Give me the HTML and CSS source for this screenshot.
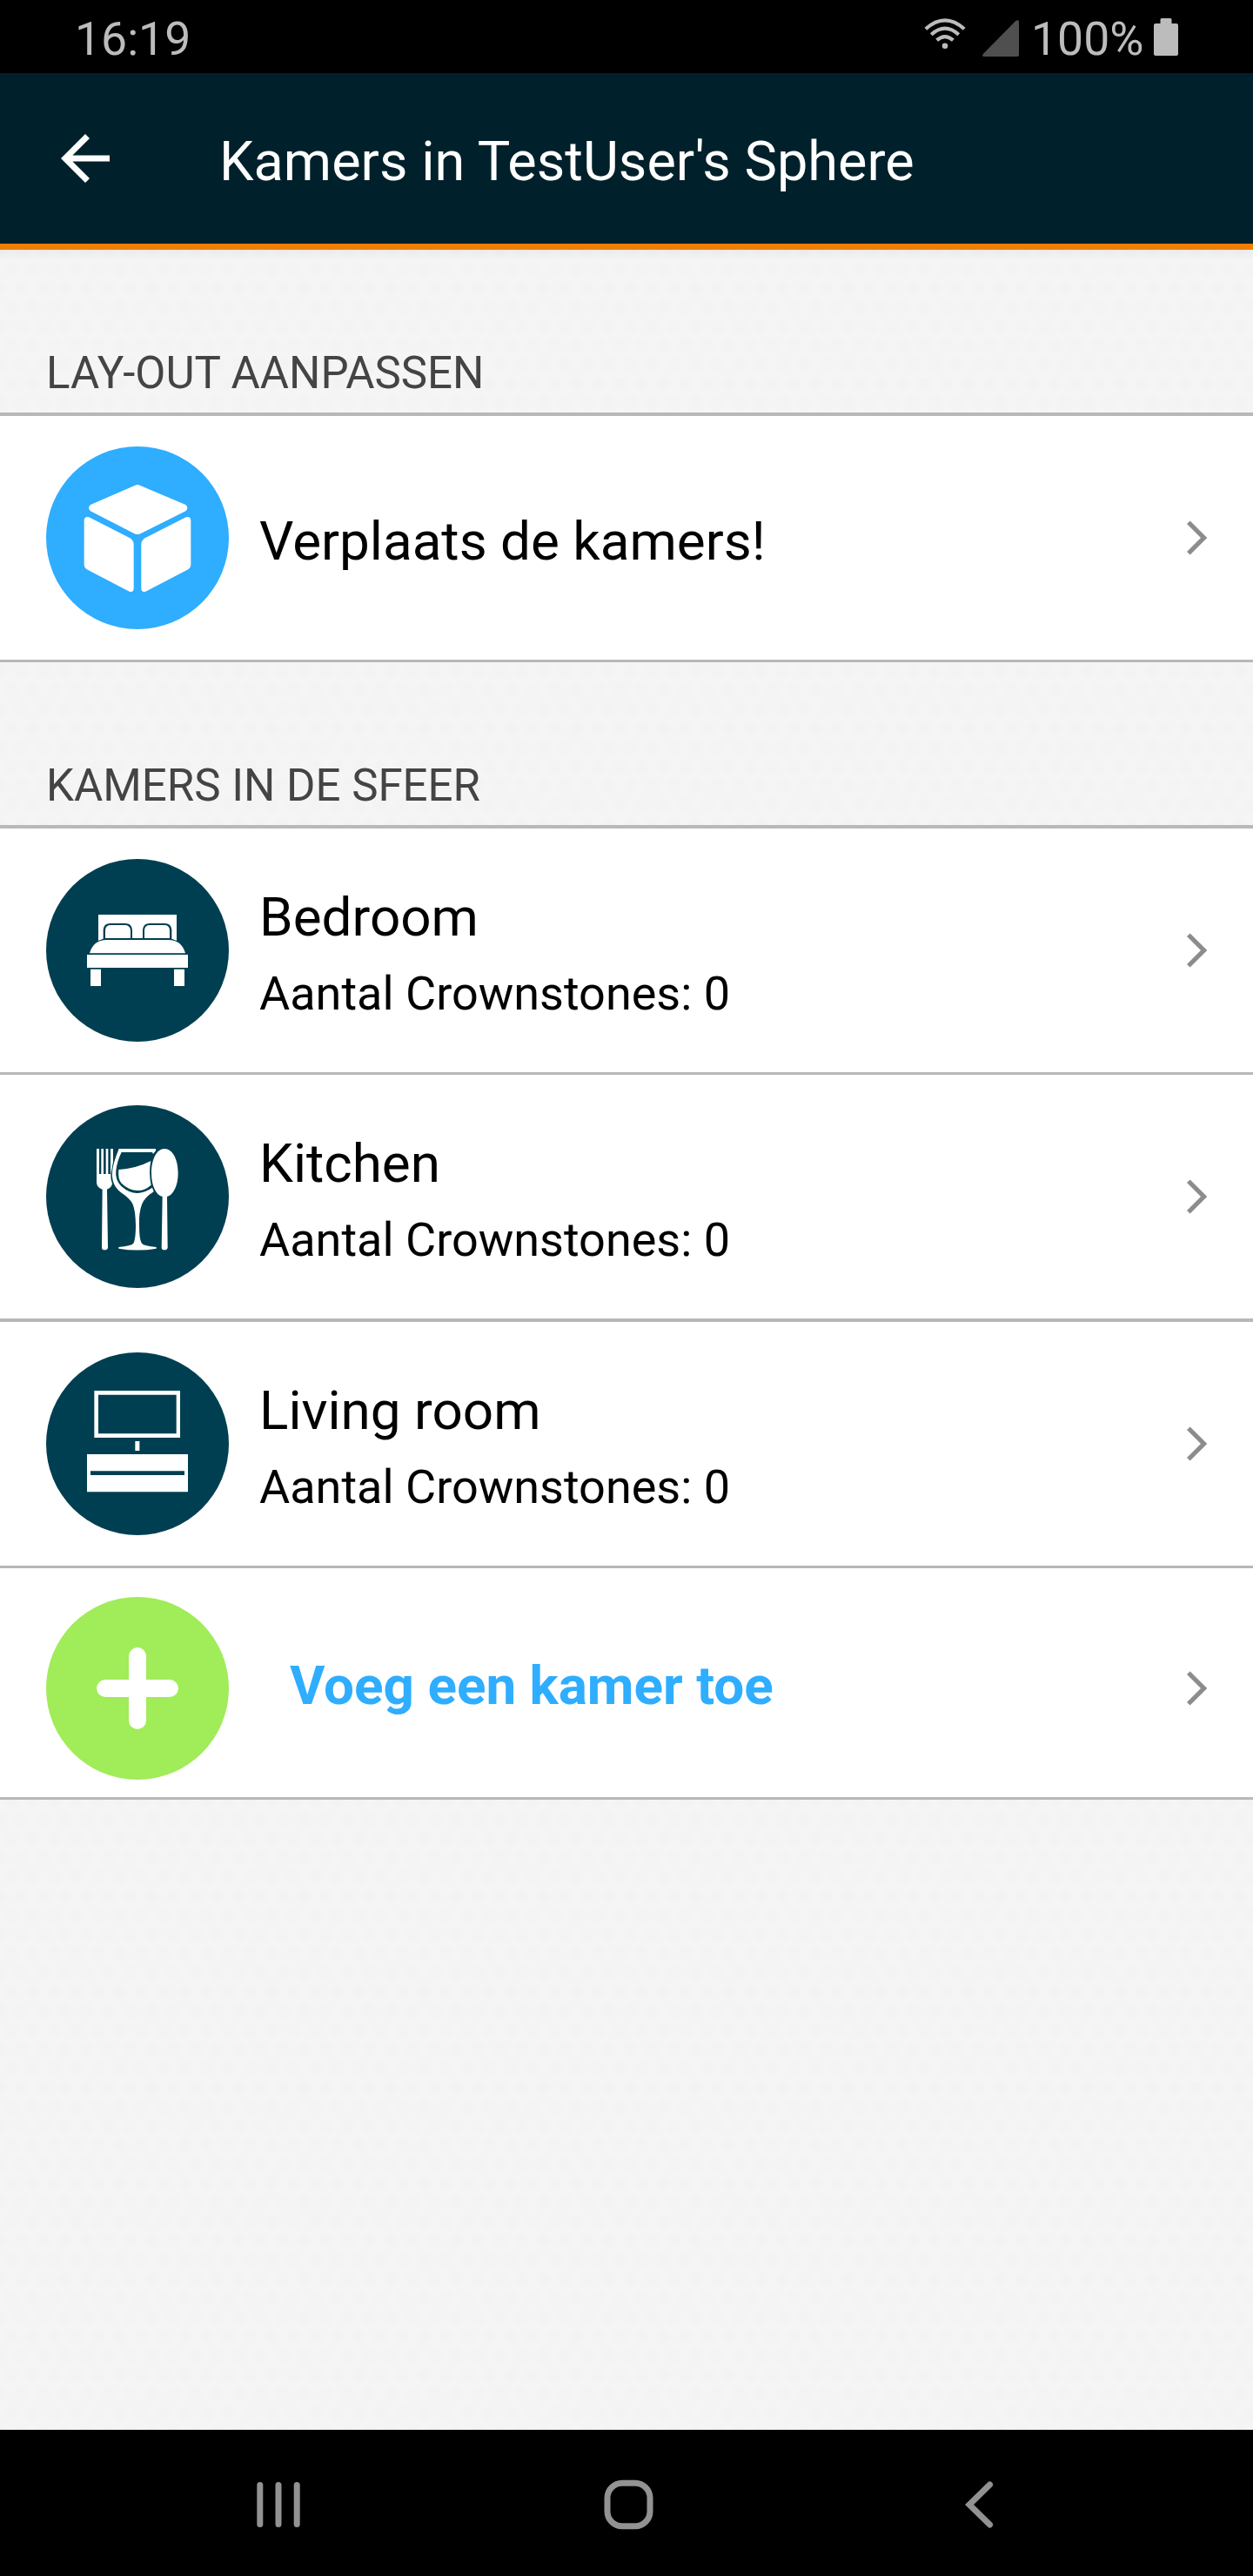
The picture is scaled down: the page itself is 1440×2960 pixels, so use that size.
FILE: index.html
```html
<!DOCTYPE html>
<html lang="nl">
<head>
<meta charset="utf-8">
<title>Kamers in TestUser's Sphere</title>
<link rel="stylesheet" href="styles.css">
</head>
<body>
<div class="screen">
  <div class="status">
    <span class="clock">16:19</span>
    <svg class="wifi" viewBox="0 0 48 36" width="48" height="36">
      <g fill="none" stroke="#bcbcbc" stroke-width="4.2">
        <path d="M1.8 12.2Q24-7.500 46.200 12.200"/>
        <path d="M8.200 18.700Q24 4.500 39.800 18.700"/>
        <path d="M14.600 25.200Q24 17 33.400 25.200"/>
      </g>
      <circle cx="24" cy="31.800" r="3.300" fill="#bcbcbc"/>
    </svg>
    <svg class="signal" viewBox="0 0 42 42" width="42" height="42">
      <path d="M38.500.8Q42-1 42 2V40Q42 42 40 42H2Q-1 42 .8 39Z" fill="#4f4f4f"/>
    </svg>
    <span class="percent">100%</span>
    <svg class="battery" viewBox="0 0 28 43" width="28" height="43">
      <path d="M9 0H19Q20.500 0 20.500 1.500V6H26Q28 6 28 8V41Q28 43 26 43H2Q0 43 0 41V8Q0 6 2 6H7.500V1.500Q7.500 0 9 0Z" fill="#bcbcbc"/>
    </svg>
  </div>
  <header class="header">
    <svg class="back" viewBox="0 0 56 56" width="56" height="56">
      <path d="M56 24.500H13.400L33 5 28 0 0 28 28 56 33 51 13.400 31.500H56Z" fill="#fff"/>
    </svg>
    <h1 class="title">Kamers in TestUser's Sphere</h1>
  </header>
  <main class="content">
    <h2 class="section first">LAY-OUT AANPASSEN</h2>
    <div class="list">
      <div class="row">
        <svg class="badge" viewBox="0 0 630 630">
          <circle cx="315" cy="315" r="315" fill="#2fadff"/>
          <g fill="#fff">
            <path d="M305 135Q315 129 325 135L481 201Q493 212 481 223L328 299Q315 307 302 299L153 223Q141 212 153 201Z"/>
            <path d="M131 254Q133 239 148 244L289 316Q302 324 302 338V489Q302 504 287 500L146 427Q131 419 131 407Z"/>
            <path d="M499 254Q497 239 482 244L341 316Q328 324 328 338V489Q328 504 343 500L484 427Q499 419 499 407Z"/>
          </g>
        </svg>
        <div class="text single"><span class="name move">Verplaats de kamers!</span></div>
        <svg class="chevron" viewBox="0 0 24 40"><path d="M3.700 .5 23.300 20 3.700 39.500 0 36 16 20 0 4Z"/></svg>
      </div>
    </div>
    <h2 class="section second">KAMERS IN DE SFEER</h2>
    <div class="list">
      <div class="row">
        <svg class="badge" viewBox="39 51 630 630">
          <circle cx="354" cy="366" r="315" fill="#003f51"/>
          <g fill="#fff">
            <path d="M219 243H489V333L472 326V295Q470 273 448 273H396Q374 273 372 295V324H336V295Q334 273 312 273H260Q238 273 236 295V326L219 333Z"/>
            <path d="M243 324V296Q244 279 262 279H310Q328 279 330 296V324Z"/>
            <path d="M378 324V296Q379 279 397 279H446Q464 279 465 296V324Z"/>
            <path d="M189 376Q202 330 248 330H460Q506 330 519 376Z"/>
            <path d="M180 381H528V426H180ZM192 431H228V489H192ZM480 431H516V489H480Z"/>
          </g>
        </svg>
        <div class="text"><span class="name">Bedroom</span><span class="detail">Aantal Crownstones: 0</span></div>
        <svg class="chevron" viewBox="0 0 24 40"><path d="M3.700 .5 23.300 20 3.700 39.500 0 36 16 20 0 4Z"/></svg>
      </div>
      <div class="row thick">
        <svg class="badge" viewBox="39 60 630 630">
          <circle cx="354" cy="375" r="315" fill="#003f51"/>
          <g fill="#fff">
            <path d="M213 210H222V297H229V210H237V297H245V210H253V297H261V210H270V256L262 298Q261 318 267 331Q264 345 249 350L252 551Q250 559 241 559Q232 559 231 551L233 350Q215 345 213 328Z"/>
            <path fill-rule="evenodd" d="M290 210H416L418 215 408 228 405 222H299Q284 252 280 285Q276 317 298 339Q328 365 356 363Q382 360 405 344L410 358Q378 378 369 402Q358 432 360 475Q360 525 369 536Q376 545 419 549V554Q355 565 289 554V549Q332 545 340 536Q348 522 348 475Q347 423 338 402Q329 382 297 361Q263 335 267 289Q269 262 290 210Z"/>
            <path d="M289 282Q350 278 400 252Q392 293 401 335Q378 355 355 354Q323 353 299 329Q286 316 289 282Z"/>
            <path d="M447 210C475 210 494 247 494 294C494 338 477 370 456 375L458 551Q456 559 447 559Q438 559 437 551L440 375C418 370 402 338 402 294C402 247 420 210 447 210Z"/>
          </g>
        </svg>
        <div class="text"><span class="name">Kitchen</span><span class="detail">Aantal Crownstones: 0</span></div>
        <svg class="chevron" viewBox="0 0 24 40"><path d="M3.700 .5 23.300 20 3.700 39.500 0 36 16 20 0 4Z"/></svg>
      </div>
      <div class="row">
        <svg class="badge" viewBox="39 42 630 630">
          <circle cx="354" cy="357" r="315" fill="#003f51"/>
          <path fill="#fff" fill-rule="evenodd" d="M205 174H501V336H205ZM219 188V322H488V188ZM346 348H361V381H346ZM180 393H528V523H180ZM192 451V465H516V451Z"/>
        </svg>
        <div class="text"><span class="name">Living room</span><span class="detail">Aantal Crownstones: 0</span></div>
        <svg class="chevron" viewBox="0 0 24 40"><path d="M3.700 .5 23.300 20 3.700 39.500 0 36 16 20 0 4Z"/></svg>
      </div>
      <div class="row add">
        <svg class="badge" viewBox="0 0 630 630">
          <circle cx="315" cy="315" r="315" fill="#a0ec59"/>
          <path d="M315 204V426M204 315H426" stroke="#fff" stroke-width="60" stroke-linecap="round"/>
        </svg>
        <div class="text"><span class="name">Voeg een kamer toe</span></div>
        <svg class="chevron" viewBox="0 0 24 40"><path d="M3.700 .5 23.300 20 3.700 39.500 0 36 16 20 0 4Z"/></svg>
      </div>
    </div>
  </main>
  <nav class="nav">
    <svg viewBox="0 0 50 58" width="50" height="58"><path d="M3.800 6.500V51.500M25 6.500V51.500M46.200 6.500V51.500" fill="none" stroke="#929292" stroke-width="7" stroke-linecap="round"/></svg>
    <svg class="home" viewBox="0 0 57 58" width="57" height="58"><rect x="4" y="4.200" width="49" height="49.500" rx="17" fill="none" stroke="#929292" stroke-width="7"/></svg>
    <svg viewBox="0 0 32 58" width="32" height="58"><path d="M28.500 6 5 29 28.500 52" fill="none" stroke="#929292" stroke-width="7" stroke-linecap="round"/></svg>
  </nav>
</div>
</body>
</html>
```
FILE: styles.css
```css
* { box-sizing: border-box; }

body {
  margin: 0;
  background: #000;
  font-family: Roboto, "Liberation Sans", sans-serif;
}

svg { display: block; flex: none; }

.screen {
  display: flex;
  flex-direction: column;
  width: 1440px;
  height: 2960px;
  overflow: hidden;
}

.status {
  display: flex;
  align-items: flex-start;
  flex: none;
  height: 84px;
  padding: 13px 86px 0;
  background: #000;
  color: #bcbcbc;
  font-size: 53.5px;
  line-height: 63px;
}
.clock { margin-right: auto; }
.wifi { margin: 8px 19px 0 0; }
.signal { margin: 10px 14px 0 0; }
.percent { width: 141px; white-space: nowrap; }
.battery { margin-top: 8px; }

.header {
  display: flex;
  align-items: center;
  flex: none;
  height: 203px;
  padding: 0 70px;
  border-bottom: 7px solid #f07e00;
  background: #00212b;
}
.title {
  margin: 7px 0 0 126px;
  color: #fff;
  font-size: 63px;
  font-weight: 400;
  line-height: 74px;
  letter-spacing: .03px;
  white-space: nowrap;
}

.content {
  flex: 1;
  background-color: #f5f5f5;
  background-image:
    linear-gradient(rgba(0, 0, 0, .035), transparent),
    radial-gradient(circle, #f3f3f3 5px, transparent 10px),
    radial-gradient(circle, #f3f3f3 5px, transparent 10px);
  background-size: 100% 14px, 25px 44px, 25px 44px;
  background-position: 0 0, 0 0, 12px 22px;
  background-repeat: no-repeat, repeat, repeat;
}

.section {
  display: flex;
  align-items: flex-end;
  height: 187px;
  margin: 0;
  padding: 0 53px 15px;
  color: #444;
  font-size: 51px;
  font-weight: 400;
  line-height: 60px;
}

.list { border-top: 4px solid #b8b8b8; }

.row {
  display: flex;
  align-items: center;
  height: 283px;
  padding: 0 52px 0 53px;
  border-bottom: 3px solid #b8b8b8;
  background: #fff;
}
.row.thick { height: 284px; border-bottom-width: 4px; }
.row.add { height: 266px; padding-top: 13px; }

.badge { width: 210px; height: 210px; }

.text {
  display: flex;
  flex: 1;
  flex-direction: column;
  padding: 11px 0 0 35px;
  color: #000;
  white-space: nowrap;
}
.text.single { padding-top: 8px; }
.name { font-size: 62px; line-height: 88px; }
.detail { font-size: 54px; line-height: 88px; }

.add .text { padding: 0 0 6px 70px; }
.add .name { color: #2fadff; font-weight: 700; }

.chevron { width: 24px; height: 40px; fill: #8c8c8c; }

.nav {
  display: flex;
  align-items: center;
  justify-content: space-between;
  flex: none;
  height: 168px;
  padding: 4px 299px 0 295px;
  background: #000;
}
.home { margin-right: 9px; }
```
